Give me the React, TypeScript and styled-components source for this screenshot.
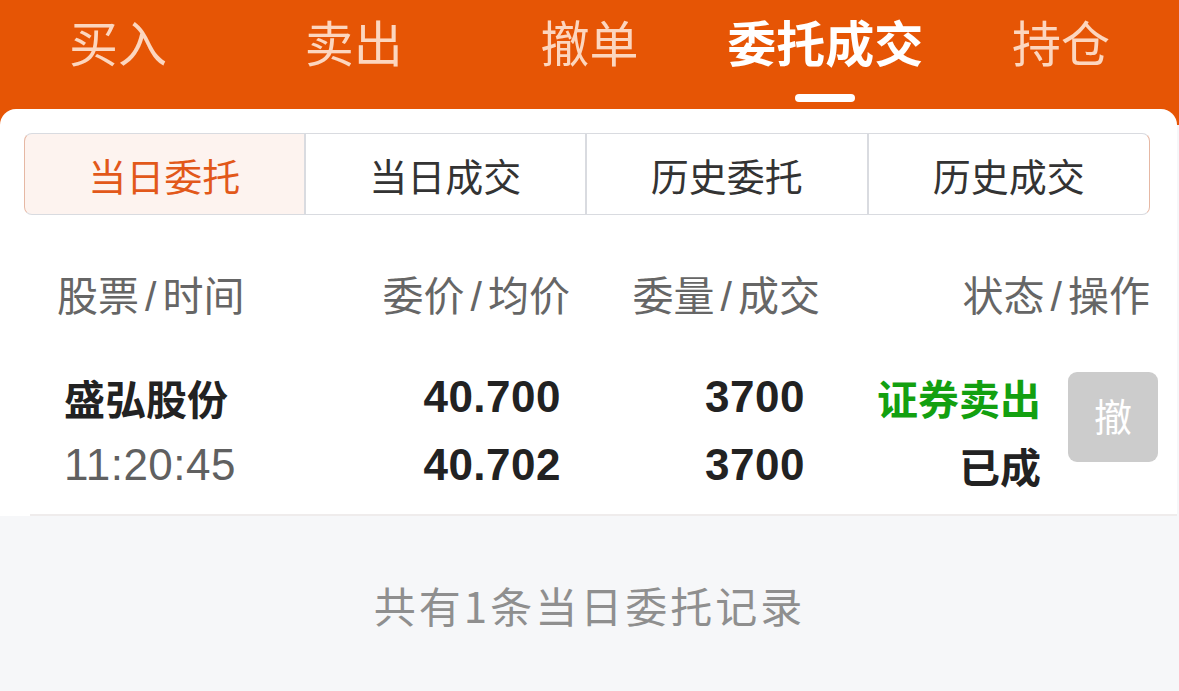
import React, { useState } from 'react';
import styled, { createGlobalStyle } from 'styled-components';

const GlobalStyle = createGlobalStyle`
  html, body {
    margin: 0;
    padding: 0;
    background: #f6f7f9;
    font-family: "Liberation Sans", "Noto Sans CJK SC", sans-serif;
  }
`;

const Page = styled.div`
  width: 1179px;
  min-height: 691px;
  background: #f6f7f9;
  overflow: hidden;
`;

const TopBar = styled.div`
  background: #e65505;
  height: 125px;
  display: grid;
  grid-template-columns: repeat(5, 1fr);
`;

const TopTab = styled.div<{ active?: boolean }>`
  display: flex;
  flex-direction: column;
  align-items: center;
  padding-top: 11px;
  font-family: "Noto Sans CJK SC", sans-serif;
  font-size: 49px;
  line-height: 60px;
  color: ${(p) => (p.active ? '#ffffff' : 'rgba(255, 232, 218, 0.88)')};
  font-weight: ${(p) => (p.active ? 700 : 400)};
`;

const Indicator = styled.div`
  margin-top: 23px;
  width: 60px;
  height: 8px;
  border-radius: 4px;
  background: #ffffff;
`;

const Card = styled.div`
  margin-top: -16px;
  background: #ffffff;
  border-radius: 16px 16px 0 0;
  width: 1177px;
`;

const Segments = styled.div`
  margin: 0 27px 0 24px;
  padding-top: 24px;
  display: grid;
  grid-template-columns: repeat(4, 1fr);
`;

const Segment = styled.div<{ active?: boolean; first?: boolean; last?: boolean }>`
  height: 80px;
  display: flex;
  align-items: center;
  justify-content: center;
  font-family: "Noto Sans CJK SC", sans-serif;
  font-size: 38px;
  color: ${(p) => (p.active ? '#e2581a' : '#333333')};
  background: ${(p) => (p.active ? '#fdf3ef' : '#ffffff')};
  border: 1px solid #d9dbe0;
  border-left: ${(p) => (p.first ? '1px solid #e6b8a4' : 'none')};
  border-right: ${(p) => (p.last ? '1px solid #e6b8a4' : '2px solid #d9dbe0')};
  border-radius: ${(p) => (p.first ? '8px 0 0 8px' : p.last ? '0 8px 8px 0' : '0')};
`;

const HeadRow = styled.div`
  margin-top: 36px;
  height: 84px;
  display: grid;
  grid-template-columns: 273px 240px 250px 1fr;
  align-items: center;
  padding: 0 27px 0 57px;
`;

const HeadCell = styled.div<{ align?: 'left' | 'right' }>`
  text-align: ${(p) => p.align ?? 'right'};
  font-family: "Noto Sans CJK SC", sans-serif;
  font-size: 41px;
  color: #666666;
  white-space: nowrap;
`;

const Slash = styled.span`
  font-family: "Liberation Sans", sans-serif;
  margin: 0 6px;
`;

const DataRow = styled.div`
  display: grid;
  grid-template-columns: 266px 231px 244px 236px 117px;
  padding: 28px 21px 17px 64px;
  position: relative;
  &::after {
    content: '';
    position: absolute;
    left: 30px;
    right: 0;
    bottom: 0;
    height: 2px;
    background: #efecec;
  }
`;

const Cell = styled.div<{ align?: 'left' | 'right' }>`
  display: flex;
  flex-direction: column;
  align-items: ${(p) => (p.align === 'left' ? 'flex-start' : 'flex-end')};
`;

const Line = styled.div<{ tone?: 'dark' | 'grey' | 'green'; cjk?: boolean }>`
  height: 68px;
  line-height: 68px;
  white-space: nowrap;
  font-family: ${(p) =>
    p.cjk ? '"Noto Sans CJK SC", sans-serif' : '"Liberation Sans", "Noto Sans CJK SC", sans-serif'};
  font-size: ${(p) => (p.cjk ? '41px' : '44px')};
  letter-spacing: ${(p) => (p.cjk ? '0' : '0.5px')};
  font-weight: ${(p) => (p.tone === 'grey' ? 400 : 700)};
  color: ${(p) => (p.tone === 'grey' ? '#606060' : p.tone === 'green' ? '#13a010' : '#222222')};
`;

const CancelButton = styled.button`
  margin-top: 9px;
  width: 90px;
  height: 90px;
  border: none;
  border-radius: 9px;
  background: #cccccc;
  color: #ffffff;
  font-family: "Noto Sans CJK SC", sans-serif;
  font-size: 38px;
  line-height: 1;
  padding: 0 0 4px;
`;

const Footer = styled.div`
  padding-top: 67px;
  text-align: center;
  font-family: "Noto Sans CJK SC", sans-serif;
  font-size: 42px;
  line-height: 44px;
  letter-spacing: 3px;
  color: #8f8f8f;
`;

const topTabs = ['买入', '卖出', '撤单', '委托成交', '持仓'];
const segments = ['当日委托', '当日成交', '历史委托', '历史成交'];

export default function App() {
  const [tab, setTab] = useState(3);
  const [seg, setSeg] = useState(0);

  return (
    <Page>
      <GlobalStyle />
      <TopBar>
        {topTabs.map((t, i) => (
          <TopTab key={t} active={i === tab} onClick={() => setTab(i)}>
            {t}
            {i === tab && <Indicator />}
          </TopTab>
        ))}
      </TopBar>
      <Card>
        <Segments>
          {segments.map((s, i) => (
            <Segment
              key={s}
              active={i === seg}
              first={i === 0}
              last={i === segments.length - 1}
              onClick={() => setSeg(i)}
            >
              {s}
            </Segment>
          ))}
        </Segments>
        <HeadRow>
          <HeadCell align="left">股票<Slash>/</Slash>时间</HeadCell>
          <HeadCell>委价<Slash>/</Slash>均价</HeadCell>
          <HeadCell>委量<Slash>/</Slash>成交</HeadCell>
          <HeadCell>状态<Slash>/</Slash>操作</HeadCell>
        </HeadRow>
        <DataRow>
          <Cell align="left">
            <Line cjk>盛弘股份</Line>
            <Line tone="grey">11:20:45</Line>
          </Cell>
          <Cell>
            <Line>40.700</Line>
            <Line>40.702</Line>
          </Cell>
          <Cell>
            <Line>3700</Line>
            <Line>3700</Line>
          </Cell>
          <Cell>
            <Line cjk tone="green">证券卖出</Line>
            <Line cjk>已成</Line>
          </Cell>
          <Cell>
            <CancelButton>撤</CancelButton>
          </Cell>
        </DataRow>
      </Card>
      <Footer>共有1条当日委托记录</Footer>
    </Page>
  );
}
